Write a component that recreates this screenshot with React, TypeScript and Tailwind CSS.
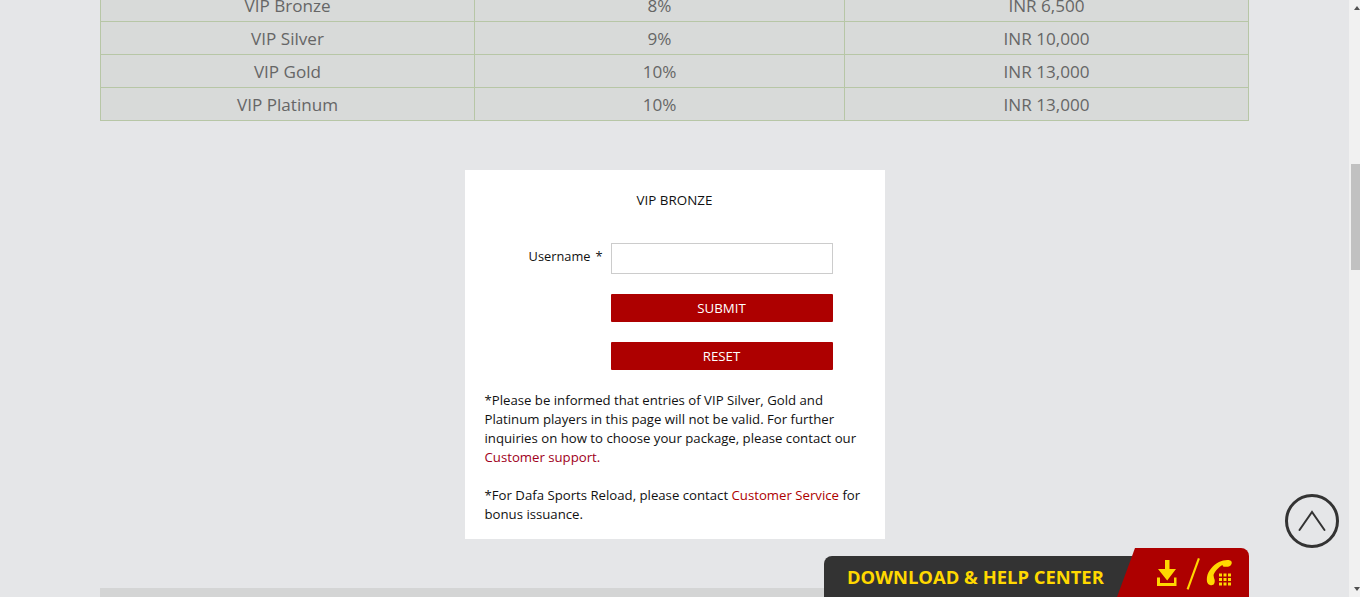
const rows = [
  ["VIP Bronze", "8%", "INR 6,500"],
  ["VIP Silver", "9%", "INR 10,000"],
  ["VIP Gold", "10%", "INR 13,000"],
  ["VIP Platinum", "10%", "INR 13,000"],
];

function Triangle({ up }: { up?: boolean }) {
  return (
    <svg width="6" height="4" viewBox="0 0 6 4" className="block" fill="#505050">
      <path d={up ? "M3 0 6 4H0Z" : "M0 0H6L3 4Z"} />
    </svg>
  );
}

function HelpIcons() {
  return (
    <svg width="86" height="36" viewBox="0 0 86 36" className="block">
      <g fill="#ffd800">
        <path d="M15 4h4.500v9H26L17.200 24.500 8 13h7Z" />
        <path d="M7 21.500h3v5.500h14v-5.500h2.500V30H7Z" />
        <path d="M36.600 33 47.900 2l2 .7L38.600 33.700Z" />
        <path d="M60 29C57 28 56.500 25 57 21 58 15 63 9 69 6 73 4 79 3 81 5 82.500 6.500 81.500 9 80 10 78 11 75 11 73 10.500L72.500 9C69 11 65 15 63.500 19L64 22C65 24 65 26 64 28 63.500 29 62 29.500 60 29Z" />
        {[0, 1, 2].map((r) =>
          [0, 1, 2].map((c) => (
            <rect key={`${r}-${c}`} x={69 + c * 4.500} y={17.500 + r * 4.500} width="3" height="3" />
          )),
        )}
      </g>
    </svg>
  );
}

export default function App() {
  return (
    <div className="flex h-[597px] w-[1360px] overflow-hidden bg-[#e5e6e8] font-['Open_Sans','Noto_Sans',sans-serif]">
      <main className="relative h-full w-[1349px] overflow-hidden">
        <div className="mx-[100px] mt-[-12px] w-[1149px]">
          <table className="w-full table-fixed border-collapse bg-[#d8dad9] text-center text-[17.100px] text-[#666666]">
            <colgroup>
              <col className="w-[374px]" />
              <col className="w-[370px]" />
              <col />
            </colgroup>
            <tbody>
              {rows.map((row) => (
                <tr key={row[0]} className="h-[33px]">
                  {row.map((cell) => (
                    <td key={cell} className="border border-[#b7c6a6] p-0 pt-[1px] leading-[31px]">
                      {cell}
                    </td>
                  ))}
                </tr>
              ))}
            </tbody>
          </table>

          <section className="mx-auto mt-[49px] h-[369px] w-[420px] bg-white px-5 pt-[20px] text-[13.200px] leading-[19px] text-[#111111]">
            <h2 className="text-center text-[13.400px] font-normal leading-[20px]">VIP BRONZE</h2>
            <form className="mt-[33px] flex flex-col gap-5">
              <div className="flex items-start">
                <label className="w-[118px] pt-[3px] text-right text-[12.800px] leading-[20px]">
                  Username<span className="ml-[5px]">*</span>
                </label>
                <input className="ml-2 h-[31px] w-[222px] border border-[#cccccc] bg-white" />
              </div>
              <button type="button" className="ml-[126px] h-[28px] w-[222px] rounded-[1px] bg-[#ad0000] text-center text-[13.250px] text-white">
                SUBMIT
              </button>
              <button type="button" className="ml-[126px] h-[28px] w-[222px] rounded-[1px] bg-[#ad0000] text-center text-[13.250px] text-white">
                RESET
              </button>
            </form>
            <p className="mt-[21px]">
              *Please be informed that entries of VIP Silver, Gold and Platinum players in this page will not be valid. For further inquiries on how to choose your package, please contact our{" "}
              <a className="text-[#a00020]">Customer support.</a>
            </p>
            <p className="mt-[19px]">
              *For Dafa Sports Reload, please contact <a className="text-[#ad0000]">Customer Service</a> for bonus issuance.
            </p>
          </section>

          <div className="mt-[49px] h-[40px] bg-[#d4d5d5]" />
        </div>

        <button
          type="button"
          aria-label="Back to top"
          className="absolute left-[1285px] top-[494px] flex h-[54px] w-[54px] items-center justify-center rounded-full border-[3px] border-[#333333]"
        >
          <svg width="28" height="22" viewBox="0 0 28 22" fill="none" stroke="#333333" strokeWidth="2" strokeLinecap="round">
            <path d="M1.500 20 14 2 26.500 20" />
          </svg>
        </button>

        <div className="absolute left-[824px] top-[548px] flex h-[49px] w-[425px] items-end">
          <div className="flex h-[41px] w-[312px] items-center rounded-tl-[8px] bg-[#333333] pl-[23px] pt-[2px] text-[18.400px] font-bold leading-none text-[#ffd800]">
            DOWNLOAD &amp; HELP CENTER
          </div>
          <div className="ml-[-19px] flex h-[49px] w-[132px] items-start justify-end rounded-tr-[8px] bg-[#ad0000] pr-[13px] pt-[8px] [clip-path:polygon(18px_0,100%_0,100%_100%,0_100%)]">
            <HelpIcons />
          </div>
        </div>
      </main>

      <aside className="flex h-full w-[11px] flex-col items-end bg-[#f1f1f1]">
        <div className="mt-[6px]">
          <Triangle up />
        </div>
        <div className="mt-[154px] h-[106px] w-[9px] bg-[#c1c1c1]" />
        <div className="mt-[317px]">
          <Triangle />
        </div>
      </aside>
    </div>
  );
}
